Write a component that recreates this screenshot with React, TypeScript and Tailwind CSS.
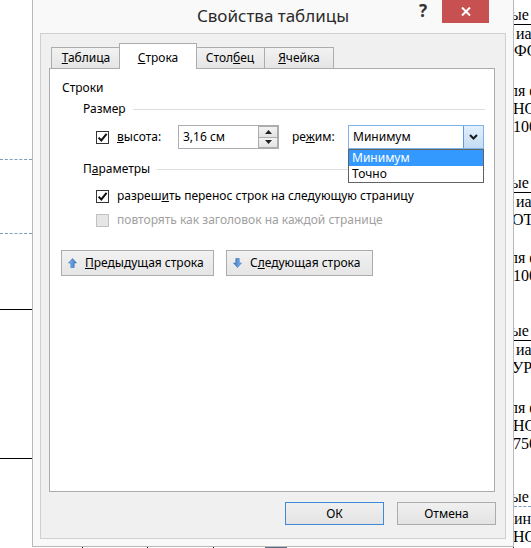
import React from "react";

function Check({ checked, disabled }: { checked?: boolean; disabled?: boolean }) {
  return (
    <span
      className={
        disabled
          ? "flex h-[13px] w-[13px] shrink-0 items-center justify-center border border-[#c2c2c2] bg-[#e6e6e6]"
          : "flex h-[13px] w-[13px] shrink-0 items-center justify-center border border-[#333333] bg-white"
      }
    >
      {checked && (
        <svg width="11" height="11" viewBox="0 0 11 11">
          <path d="M1.6 5.6 L4.3 8.4 L9.6 1.8" fill="none" stroke="#111" strokeWidth="2" />
        </svg>
      )}
    </span>
  );
}

function Arrow({ down }: { down?: boolean }) {
  const id = down ? "gd" : "gu";
  return (
    <svg width="9" height="10" viewBox="0 0 9 10" className={down ? "rotate-180" : ""}>
      <defs>
        <linearGradient id={id} x1="0" y1="0" x2="1" y2="0">
          <stop offset="0" stopColor="#8fc0f2" />
          <stop offset="1" stopColor="#2f6fc4" />
        </linearGradient>
      </defs>
      <path d="M4.5 0.5 L8.5 5 H6.2 V9.5 H2.8 V5 H0.5 Z" fill={`url(#${id})`} stroke="#3a72b8" strokeWidth="0.6" />
    </svg>
  );
}

function Tab({ children, active, w }: { children: React.ReactNode; active?: boolean; w: string }) {
  if (active) {
    return (
      <div
        className={`relative z-10 -mx-[2px] -mb-px flex h-[26px] items-start justify-center border border-b-0 border-[#acacac] bg-white pt-[5px] ${w}`}
      >
        {children}
      </div>
    );
  }
  return (
    <div
      className={`flex h-[21px] items-center justify-center border border-b-0 border-[#acacac] bg-gradient-to-b from-[#f2f2f2] to-[#e5e5e5] ${w}`}
    >
      {children}
    </div>
  );
}

const docLines: { t: string; mt: number; h?: number; line?: "solid" | "dashed"; shift?: number }[] = [
  { t: "ые", mt: 6, line: "solid", shift: -5 },
  { t: "иан", mt: 0, h: 17 },
  { t: "ФО", mt: 0, h: 17, shift: -2 },
  { t: "ля ф", mt: 23, shift: -6 },
  { t: "НО", mt: 0, shift: -3 },
  { t: "100", mt: 0, shift: -3 },
  { t: "ые", mt: 38, line: "solid", shift: -5 },
  { t: "иан", mt: 0 },
  { t: "ОТ", mt: 0, shift: -4 },
  { t: "ля ф", mt: 20, shift: -6 },
  { t: "100", mt: 0, shift: -3 },
  { t: "ые", mt: 37, line: "solid", shift: -5 },
  { t: "иан", mt: 0 },
  { t: "УР", mt: 0, shift: -4 },
  { t: "ля ф", mt: 22, shift: -6 },
  { t: "НО", mt: 0, shift: -3 },
  { t: "750", mt: 0, shift: -3 },
  { t: "ые", mt: 35, line: "dashed", shift: -5 },
  { t: "ина", mt: 3, shift: -2 },
  { t: "НО", mt: 0, shift: -3 },
];

export default function App() {
  return (
    <div className="relative h-[548px] w-[531px] overflow-hidden bg-white font-['Noto_Sans',sans-serif] text-[12px] text-black">
      {/* документ за окном */}
      <div className="flex h-full">
        <div className="flex w-[32px] flex-col">
          <div className="h-[159px]" />
          <div className="border-t border-dashed border-[#7d9db8]" />
          <div className="h-[73px]" />
          <div className="border-t border-dashed border-[#7d9db8]" />
          <div className="h-[75px]" />
          <div className="border-t border-black" />
          <div className="h-[148px]" />
          <div className="border-t border-black" />
        </div>
        <div className="flex flex-1 flex-col justify-end">
          <div className="flex h-[2px] items-stretch">
            <div className="ml-[50px] w-px bg-black" />
            <div className="ml-[64px] w-px bg-black" />
            <div className="ml-[65px] w-px bg-black" />
            <div className="ml-[51px] w-[22px] bg-[#5b6b82]" />
          </div>
        </div>
        <div className="flex w-[18px] flex-col overflow-hidden border-l border-[#3a3a3a] font-['Liberation_Serif',serif] text-[16px]">
          {docLines.map((l, i) => (
            <div
              key={i}
              className={
                l.line === "solid"
                  ? "border-b border-black"
                  : l.line === "dashed"
                    ? "border-b border-dashed border-[#7d9db8]"
                    : ""
              }
              style={{ marginTop: l.mt, height: (l.h ?? 18) + (l.line ? 1 : 0), lineHeight: `${l.h ?? 18}px` }}
            >
              <span className="block whitespace-nowrap pl-[2px]" style={{ marginLeft: l.shift ?? 0 }}>
                {l.t}
              </span>
            </div>
          ))}
        </div>
      </div>

      {/* окно диалога */}
      <div className="absolute left-[32px] top-0 flex h-[547px] w-[482px] flex-col border-x border-b border-[#b9b9b9] bg-[#f9f9f9]">
        <div className="relative flex h-[33px] items-center justify-center">
          <span className="-mt-px text-[17px] text-[#2b2b2b]">Свойства таблицы</span>
          <span className="absolute left-[386px] top-[1px] text-[17px] font-bold leading-[20px] text-[#333]">?</span>
          <div className="absolute left-[409px] top-0 flex h-[23px] w-[47px] items-center justify-center bg-[#c75050]">
            <svg width="10" height="9" viewBox="0 0 10 9">
              <path d="M1 0.5 L9 8.5 M9 0.5 L1 8.5" stroke="#fff" strokeWidth="2" />
            </svg>
          </div>
        </div>

        <div className="mx-[7px] flex h-[506px] flex-col border border-[#cfcfcf] bg-[#f0f0f0] pl-[8px] pr-[10px] pt-[9px]">
          {/* вкладки */}
          <div className="flex h-[25px] items-end pl-[2px]">
            <Tab w="w-[70px]">
              <span>
                <u>Т</u>аблица
              </span>
            </Tab>
            <Tab w="w-[78px]" active>
              <span>
                <u>С</u>трока
              </span>
            </Tab>
            <Tab w="w-[70px]">
              <span>
                Стол<u>б</u>ец
              </span>
            </Tab>
            <Tab w="w-[70px] -ml-px">
              <span>
                <u>Я</u>чейка
              </span>
            </Tab>
          </div>

          <div className="h-[424px] border border-[#acacac] bg-white">
            <div className="flex flex-col pt-[11px] leading-4">
              <div className="pl-[12px]">Строки</div>

              <div className="mt-[5px] flex items-center pl-[33px] pr-[9px]">
                <span>Размер</span>
                <div className="ml-[7px] h-px flex-1 bg-[#dcdcdc]" />
              </div>

              <div className="mt-[8px] flex h-[24px] items-center pl-[46px]">
                <Check checked />
                <span className="ml-[8px] w-[61px]">
                  <u>в</u>ысота:
                </span>
                <div className="flex h-[24px] w-[101px] items-stretch border border-[#abadb3] bg-white">
                  <span className="flex flex-1 items-center pl-[4px]">3,16 см</span>
                  <div className="flex w-[20px] flex-col">
                    <div className="flex flex-1 items-center justify-center border border-[#acacac] bg-gradient-to-b from-[#f3f3f3] to-[#e3e3e3]">
                      <svg width="7" height="4" viewBox="0 0 7 4">
                        <path d="M0 4 L3.5 0 L7 4 Z" fill="#222" />
                      </svg>
                    </div>
                    <div className="flex flex-1 items-center justify-center border border-t-0 border-[#acacac] bg-gradient-to-b from-[#f3f3f3] to-[#e3e3e3]">
                      <svg width="7" height="4" viewBox="0 0 7 4">
                        <path d="M0 0 L3.5 4 L7 0 Z" fill="#222" />
                      </svg>
                    </div>
                  </div>
                </div>
                <span className="ml-[13px] w-[56px]">
                  ре<u>ж</u>им:
                </span>
                <div className="relative flex h-[24px] w-[136px] items-stretch border border-[#7eb4ea] bg-white">
                  <span className="flex flex-1 items-center pl-[4px]">Минимум</span>
                  <div className="flex w-[20px] items-center justify-center border-l border-[#569de5] bg-gradient-to-b from-[#e3effb] to-[#c4dcf4]">
                    <svg width="9" height="6" viewBox="0 0 9 6">
                      <path d="M1 1 L4.5 4.5 L8 1" fill="none" stroke="#1a1a1a" strokeWidth="2" />
                    </svg>
                  </div>
                  <div className="absolute left-[-1px] top-[23px] z-20 w-[136px] border border-[#646464] bg-white">
                    <div className="h-[16px] bg-[#3399ff] pl-[3px] leading-[16px] text-white">Минимум</div>
                    <div className="h-[16px] pl-[3px] leading-[16px]">Точно</div>
                  </div>
                </div>
              </div>

              <div className="mt-[12px] flex items-center pl-[33px] pr-[9px]">
                <span>
                  П<u>а</u>раметры
                </span>
                <div className="ml-[7px] h-px flex-1 bg-[#dcdcdc]" />
              </div>

              <div className="mt-[11px] flex items-center pl-[46px]">
                <Check checked />
                <span className="ml-[8px]">
                  разреш<u>и</u>ть перенос строк на следующую страницу
                </span>
              </div>

              <div className="mt-[8px] flex items-center pl-[46px]">
                <Check disabled />
                <span className="ml-[8px] text-[#a0a0a0]">повторять как заголовок на каждой странице</span>
              </div>

              <div className="mt-[22px] flex gap-[12px] pl-[11px]">
                <div className="flex h-[26px] w-[153px] items-center gap-[8px] border border-[#acacac] bg-gradient-to-b from-[#f2f2f2] to-[#e5e5e5] pl-[6px]">
                  <Arrow />
                  <span>
                    <u>П</u>редыдущая строка
                  </span>
                </div>
                <div className="flex h-[26px] w-[147px] items-center gap-[8px] border border-[#acacac] bg-gradient-to-b from-[#f2f2f2] to-[#e5e5e5] pl-[6px]">
                  <Arrow down />
                  <span>
                    С<u>л</u>едующая строка
                  </span>
                </div>
              </div>
            </div>
          </div>

          <div className="-mr-px mt-[10px] flex justify-end gap-[13px]">
            <div className="flex h-[23px] w-[99px] items-center justify-center border border-[#3c8ad8] bg-gradient-to-b from-[#f0f0f0] to-[#e3e3e3]">
              ОК
            </div>
            <div className="flex h-[23px] w-[99px] items-center justify-center border border-[#acacac] bg-gradient-to-b from-[#f0f0f0] to-[#e3e3e3]">
              Отмена
            </div>
          </div>
        </div>
      </div>
    </div>
  );
}
